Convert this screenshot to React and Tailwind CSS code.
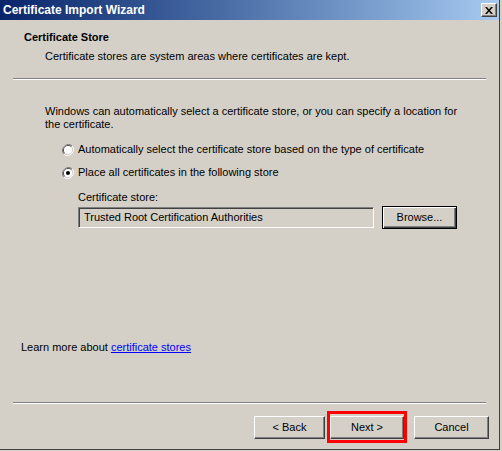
import React from "react";

const raised =
  "border border-t-white border-l-white border-r-[#404040] border-b-[#404040] shadow-[inset_-1px_-1px_#808080,inset_1px_1px_#d4d0c8] bg-[#d4d0c8]";

function Radio({ checked }) {
  return (
    <svg width="12" height="12" viewBox="0 0 12 12" className="shrink-0">
      <path d="M10.2 1.8 A6 6 0 0 0 1.8 10.2" fill="none" stroke="#808080" strokeWidth="1" />
      <path d="M9.5 2.5 A5 5 0 0 0 2.5 9.5" fill="none" stroke="#404040" strokeWidth="1" />
      <path d="M1.8 10.2 A6 6 0 0 0 10.2 1.8" fill="none" stroke="#ffffff" strokeWidth="1" />
      <path d="M2.5 9.5 A5 5 0 0 0 9.5 2.5" fill="none" stroke="#d4d0c8" strokeWidth="1" />
      <circle cx="6" cy="6" r="4" fill="#ffffff" />
      {checked && <circle cx="6" cy="6" r="2" fill="#000000" />}
    </svg>
  );
}

function Button({ children, className = "" }) {
  return (
    <button className={`flex h-[23px] items-center justify-center ${raised} ${className}`}>{children}</button>
  );
}

export default function App() {
  return (
    <div className="relative h-[451px] w-[502px] overflow-hidden bg-[#d4d0c8] font-['Liberation_Sans',Arial,sans-serif] text-[11px] leading-[13px] text-black">
      <div className="flex h-[450px] w-[500px] flex-col border-r border-b border-r-[#404040] border-b-[#404040]">
        {/* title bar */}
        <div className="flex h-[20px] shrink-0 items-center justify-between bg-gradient-to-r from-[#0a246a] to-[#a6caf0] pl-[3px] pr-[2px]">
          <span className="text-[12px] font-bold text-white">Certificate Import Wizard</span>
          <div className={`flex h-[14px] w-[16px] items-center justify-center ${raised}`}>
            <svg width="8" height="7" viewBox="0 0 8 7">
              <path d="M0 0h2l2 2.5 2-2.5h2L5 3.5 8 7H6L4 4.5 2 7H0l3-3.5z" fill="#000" />
            </svg>
          </div>
        </div>

        {/* header */}
        <div className="mt-[11px] pl-[24px] font-bold">Certificate Store</div>
        <div className="mt-[6px] pl-[45px]">Certificate stores are system areas where certificates are kept.</div>
        <div className="mx-[13px] mt-[15px] border-t border-b border-t-[#808080] border-b-white" />

        {/* body */}
        <div className="mt-[25px] pl-[45px]">
          Windows can automatically select a certificate store, or you can specify a location for
          <br />
          the certificate.
        </div>
        <label className="mt-[12px] flex items-center gap-[4px] pl-[62px]">
          <Radio />
          <span>Automatically select the certificate store based on the type of certificate</span>
        </label>
        <label className="mt-[10px] flex items-center gap-[4px] pl-[62px]">
          <Radio checked />
          <span>Place all certificates in the following store</span>
        </label>
        <div className="mt-[12px] pl-[78px]">Certificate store:</div>
        <div className="mt-[2px] flex items-center gap-[8px] pl-[78px]">
          <div className="flex h-[21px] w-[296px] items-center border border-t-[#808080] border-l-[#808080] border-r-white border-b-white pl-[5px] shadow-[inset_1px_1px_#404040,inset_-1px_-1px_#d4d0c8]">
            Trusted Root Certification Authorities
          </div>
          <button className="h-[23px] w-[75px] border border-black bg-[#d4d0c8] shadow-[inset_1px_1px_#ffffff,inset_-1px_-1px_#404040,inset_-2px_-2px_#808080]">
            Browse...
          </button>
        </div>

        <div className="mt-[112px] pl-[21px]">
          Learn more about <span className="text-[#0000ff] underline">certificate stores</span>
        </div>

        <div className="mx-[13px] mt-[48px] border-t border-b border-t-[#808080] border-b-white" />

        <div className="mt-[12px] flex pl-[254px]">
          <Button className="w-[71px]">&lt; Back</Button>
          <Button className="ml-[5px] w-[74px]">Next &gt;</Button>
          <Button className="ml-[10px] w-[75px]">Cancel</Button>
        </div>
      </div>

      {/* highlight */}
      <div className="absolute left-[327px] top-[411px] h-[32px] w-[80px] border-[3px] border-[#ff0000]" />
    </div>
  );
}
